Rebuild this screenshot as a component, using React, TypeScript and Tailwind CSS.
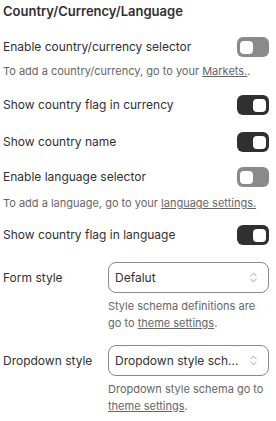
import { ChevronsUpDown } from 'lucide-react'

const Toggle = ({ on }: { on: boolean }) => (
  <div
    className={`flex h-[20px] w-[32px] shrink-0 items-center rounded-[6px] px-[3px] ${
      on ? 'justify-end bg-[#303030]' : 'justify-start bg-[#8a8a8a]'
    }`}
  >
    <div className="h-[13px] w-[13px] rounded-[4px] bg-white" />
  </div>
)

const ToggleRow = ({ label, on }: { label: string; on: boolean }) => (
  <div className="flex h-[20px] items-center justify-between">
    <span className="text-[12px] text-[#303030]">{label}</span>
    <Toggle on={on} />
  </div>
)

const Help = ({ children }: { children: React.ReactNode }) => (
  <p className="text-[11px] leading-[17px] text-[#666666]">{children}</p>
)

const SelectRow = ({ label, value, help }: { label: string; value: string; help: React.ReactNode }) => (
  <div className="flex">
    <div className="flex h-[31px] w-[105px] shrink-0 items-center text-[12px] text-[#303030]">{label}</div>
    <div className="min-w-0 flex-1">
      <div className="flex h-[31px] items-center justify-between rounded-[8px] border border-[#8a8a8a] pl-[6px] pr-[8px]">
        <span className="whitespace-nowrap text-[12px] text-[#303030]">{value}</span>
        <ChevronsUpDown className="ml-1 h-[13px] w-[13px] shrink-0 text-[#8a8a8a]" strokeWidth={1.5} />
      </div>
      <div className="mt-[5px]">
        <Help>{help}</Help>
      </div>
    </div>
  </div>
)

export default function App() {
  return (
    <div className="h-[421px] w-[276px] bg-white pl-[3px] pr-[7px] pt-[2px] font-['Inter',sans-serif]">
      <h2 className="text-[13px] font-semibold leading-[18px] text-[#303030]">Country/Currency/Language</h2>

      <div className="mt-[17px]">
        <ToggleRow label="Enable country/currency selector" on={false} />
        <div className="mt-[6px]">
          <Help>
            To add a country/currency, go to your <span className="underline">Markets.</span>.
          </Help>
        </div>
      </div>

      <div className="mt-[15px]">
        <ToggleRow label="Show country flag in currency" on={true} />
      </div>
      <div className="mt-[17px]">
        <ToggleRow label="Show country name" on={true} />
      </div>

      <div className="mt-[15px]">
        <ToggleRow label="Enable language selector" on={false} />
        <div className="mt-[8px]">
          <Help>
            To add a language, go to your <span className="underline">language settings.</span>
          </Help>
        </div>
      </div>

      <div className="mt-[13px]">
        <ToggleRow label="Show country flag in language" on={true} />
      </div>

      <div className="mt-[17px]">
        <SelectRow
          label="Form style"
          value="Defalut"
          help={
            <>
              Style schema definitions are go to <span className="underline">theme settings</span>.
            </>
          }
        />
      </div>

      <div className="mt-[13px]">
        <SelectRow
          label="Dropdown style"
          value="Dropdown style sch..."
          help={
            <>
              Dropdown style schema go to <span className="underline">theme settings</span>.
            </>
          }
        />
      </div>
    </div>
  )
}
